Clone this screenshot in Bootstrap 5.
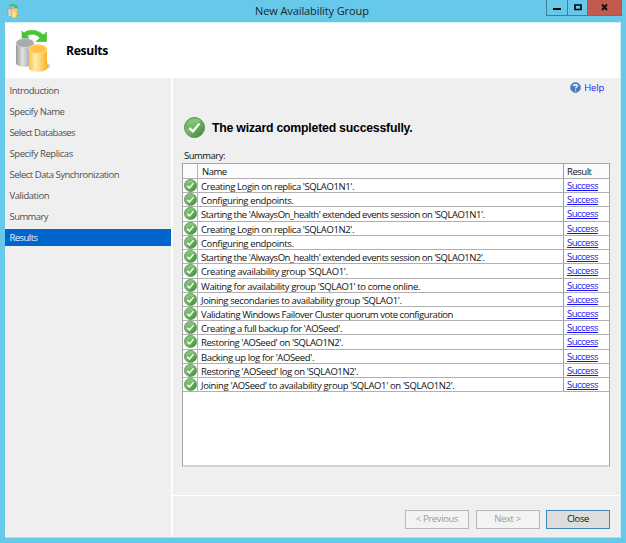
<!DOCTYPE html>
<html lang="en">
<head>
<meta charset="utf-8">
<title>New Availability Group</title>
<meta name="viewport" content="width=device-width, initial-scale=1">
<link href="https://cdn.jsdelivr.net/npm/bootstrap@5.3.0/dist/css/bootstrap.min.css" rel="stylesheet">
<style>
body{font-family:"Open Sans","Noto Sans",sans-serif;font-size:9.5px;line-height:14px;color:#111;background:#66c9ea;letter-spacing:-.2px}
.window{width:626px;height:543px;padding:0 5px 5px;background:#66c9ea}
.titlebar{height:22px;flex:none}
.app-ico{width:12px;height:14px;margin:4px 0 0 2px}
.win-title{font-size:11px;line-height:22px;letter-spacing:-.1px;color:#17272e;margin-left:236px}
.controls{height:16px;margin-right:-1px;border:1px solid #437f94;border-top:0}
.ctl{height:15px;width:20px;border-right:1px solid #437f94}
.ctl-wide{width:21px}
.ctl-close{width:33px;background:#c25a50;border:0}
.client{background:#efefef;border-top:1px solid #d3edf6;border-bottom:1px solid #d0d4d6;border-right:1px solid #d3e9f1}
.head{height:55px;background:#fff}
.head svg{margin-left:8px;margin-top:2px}
.head h1{font-size:12.2px;font-weight:700;line-height:18px;margin:1px 0 0 13px;color:#000;letter-spacing:-.35px}
.side{width:167px;border-right:1px solid #fff;padding-top:4px}
.side .nav-link{padding:0 0 0 4.5px;height:17px;line-height:18px;margin-bottom:4px;color:#505050;border-radius:0}
.side .nav-link.active{background:#0066cc;color:#e9f2fb}
.main{border-left:1px solid #fafafa}
.help{height:19px;padding-right:16px;gap:3px;font-size:9.5px}
.help a{color:#2424e8}
.done{height:34px;margin:13px 0 0 11px;gap:7px}
.done h2{font:700 12.3px/20px "Liberation Sans",Arial,sans-serif;margin:2px 0 0;color:#000;letter-spacing:0}
.sum{margin:4px 0 1px 11px;line-height:15px}
.list{width:428px;height:304px;margin-left:9px;margin-top:-1px;background:#fff;border:1px solid #a2a2a8;border-bottom:2px solid #d4d4d4}
.line{height:14.23px;border-bottom:1px solid #b0b0b2}
.line.hd{height:15px;background:#fbfbfb}
.c-ico{width:15px;border-right:1px solid #b5b5b8;padding-left:1px}
.c-name{padding-left:3px;line-height:15px;white-space:nowrap}
.hd .c-name{padding-left:4px}
.c-res{width:46px;border-left:1px solid #9d9da2;padding-left:3px;line-height:13.5px}
.hd .c-res{line-height:15px}
.c-res a{color:#1414f0}
.foot{height:42px;border-top:1px solid #fff;padding:5px 10px 0 0;gap:6.5px}
.foot .btn{width:64px;height:19px;padding:0;font-size:9.5px;line-height:16px;letter-spacing:-.35px;border-radius:0;color:#111;background:#ddd;border:1px solid #3f87bb}
.foot .btn:disabled{color:#9b9b9b;background:#f3f3f3;border-color:#b6b8ba;opacity:1}
</style>
<script src="https://cdn.jsdelivr.net/npm/bootstrap@5.3.0/dist/js/bootstrap.bundle.min.js"></script>
</head>
<body class="overflow-hidden">
<svg width="0" height="0" class="position-absolute">
<defs>
<linearGradient id="gy"><stop offset="0" stop-color="#ffc23a"/><stop offset=".35" stop-color="#ffeeb0"/><stop offset="1" stop-color="#f9b428"/></linearGradient>
<linearGradient id="gg"><stop offset="0" stop-color="#999"/><stop offset=".35" stop-color="#e2e2e2"/><stop offset="1" stop-color="#8d8d8d"/></linearGradient>
<linearGradient id="gc" x2="1" y2="1"><stop offset="0" stop-color="#5aa94f"/><stop offset=".4" stop-color="#78bd6c"/><stop offset="1" stop-color="#3a8433"/></linearGradient>
<radialGradient id="sh"><stop offset="0" stop-color="#777"/><stop offset="1" stop-color="#777" stop-opacity="0"/></radialGradient>
<symbol id="ok" viewBox="0 0 20 20"><circle cx="10" cy="10" r="9.5" fill="url(#gc)" stroke="#4b8f43" stroke-width=".9"/><path d="M2 9a8 8 0 0 1 14-5Q8 5 2 9" fill="#fff" opacity=".15"/><path d="M5.200 10.600l3.300 3.100 6.200-7.400" fill="none" stroke="#fff" stroke-width="2.200"/></symbol>
<symbol id="db" viewBox="0 0 36 43">
<ellipse cx="30" cy="36" rx="6" ry="4" fill="url(#sh)"/>
<path d="M1 13v20c0 5 18 5 18 0V13z" fill="url(#gg)"/><ellipse cx="10" cy="13" rx="9" ry="4.500" fill="#aaa" stroke="#d9d9d9" stroke-width=".8"/>
<path d="M14 19v19c0 5 18 5 18 0V19z" fill="url(#gy)"/><ellipse cx="23" cy="19" rx="9" ry="4.500" fill="#ffc64a" stroke="#ffe49a" stroke-width=".8"/>
<path d="M7 1v7h7l-2-2c4-3 10-2 13 2l-4 3.500h10.500V2l-3 3C22-1 13-1 9 3z" fill="#45c832" stroke="#35ad28" stroke-width=".5"/>
</symbol>
</defs></svg>
<div class="window d-flex flex-column">
 <header class="titlebar d-flex align-items-start">
  <svg class="app-ico"><use href="#db"/></svg>
  <div class="win-title">New Availability Group</div>
  <div class="controls d-flex ms-auto">
   <div class="ctl ctl-wide"><svg width="20" height="15" class="d-block"><path d="M6 8h8v2H6z"/></svg></div>
   <div class="ctl"><svg width="19" height="15" class="d-block"><path d="M7 5h6v4.500H7z" fill="none" stroke="#000" stroke-width="1.600"/></svg></div>
   <div class="ctl ctl-close"><svg width="33" height="15" class="d-block"><path d="M14 4.500l5 5.500M19 4.500l-5 5.500" stroke="#111" stroke-width="1.900"/></svg></div>
  </div>
 </header>
 <div class="client d-flex flex-column flex-grow-1">
  <div class="head d-flex align-items-center">
   <svg width="40" height="43"><use href="#db"/></svg>
   <h1>Results</h1>
  </div>
  <div class="d-flex flex-grow-1">
   <nav class="side nav flex-column flex-nowrap flex-shrink-0">
    <a class="nav-link"><span data-fit="49.500">Introduction</span></a>
    <a class="nav-link"><span data-fit="55">Specify Name</span></a>
    <a class="nav-link"><span data-fit="65.500">Select Databases</span></a>
    <a class="nav-link"><span data-fit="63.300">Specify Replicas</span></a>
    <a class="nav-link"><span data-fit="109.500">Select Data Synchronization</span></a>
    <a class="nav-link"><span data-fit="39.500">Validation</span></a>
    <a class="nav-link"><span data-fit="38.500">Summary</span></a>
    <a class="nav-link active"><span data-fit="28">Results</span></a>
   </nav>
   <main class="main d-flex flex-column flex-grow-1">
    <div class="help d-flex justify-content-end align-items-center">
     <svg width="11" height="11" viewBox="0 0 11 11"><circle cx="5.500" cy="5.500" r="5" fill="#4077bd" stroke="#7c9cc6"/><path d="M2 4a4 4 0 0 1 7 0z" fill="#9fc0e6"/><path d="M3.900 4.200c0-2 3.400-2 3.300 0 0 1-1.600 1.200-1.600 2.300M5.600 7.600v1.200" fill="none" stroke="#fff" stroke-width="1.200"/></svg>
     <a class="text-decoration-none">Help</a>
    </div>
    <div class="done d-flex align-items-center"><svg width="21" height="21"><use href="#ok"/></svg><h2><span data-fit="200.500">The wizard completed successfully.</span></h2></div>
    <div class="sum"><span data-fit="41">Summary:</span></div>
    <div class="list">
     <div class="line hd d-flex"><div class="c-ico"></div><div class="c-name flex-grow-1"><span data-fit="24.500">Name</span></div><div class="c-res"><span data-fit="24.500">Result</span></div></div>
     <div id="rows"></div>
    </div>
    <div class="foot d-flex align-items-center justify-content-end mt-auto">
     <button class="btn" disabled>&lt; Previous</button><button class="btn" disabled>Next &gt;</button><button class="btn">Close</button>
    </div>
   </main>
  </div>
 </div>
</div>
<script>
// [step text, text width in px]
const steps=[["Creating Login on replica 'SQLAO1N1'.",153],["Configuring endpoints.",92.5],["Starting the 'AlwaysOn_health' extended events session on 'SQLAO1N1'.",283.500],["Creating Login on replica 'SQLAO1N2'.",153],["Configuring endpoints.",92.5],["Starting the 'AlwaysOn_health' extended events session on 'SQLAO1N2'.",283.500],["Creating availability group 'SQLAO1'.",146.5],["Waiting for availability group 'SQLAO1' to come online.",219],["Joining secondaries to availability group 'SQLAO1'.",200.5],["Validating Windows Failover Cluster quorum vote configuration",252],["Creating a full backup for 'AOSeed'.",141],["Restoring 'AOSeed' on 'SQLAO1N2'.",142],["Backing up log for 'AOSeed'.",113],["Restoring 'AOSeed' log on 'SQLAO1N2'.",157],["Joining 'AOSeed' to availability group 'SQLAO1' on 'SQLAO1N2'.",253.5]];
document.getElementById("rows").innerHTML=steps.map(([s,w])=>`<div class="line d-flex"><div class="c-ico"><svg width="13" height="13" class="d-block"><use href="#ok"/></svg></div><div class="c-name flex-grow-1"><span data-fit="${w}">${s}</span></div><div class="c-res"><a class="text-decoration-underline"><span data-fit="31">Success</span></a></div></div>`).join("");
// Tighten each label's tracking to its width
document.querySelectorAll("[data-fit]").forEach(e=>{
  e.style.letterSpacing="0px";
  e.style.letterSpacing=((+e.dataset.fit-e.getBoundingClientRect().width)/e.textContent.length)+"px";
});
</script>
</body>
</html>
